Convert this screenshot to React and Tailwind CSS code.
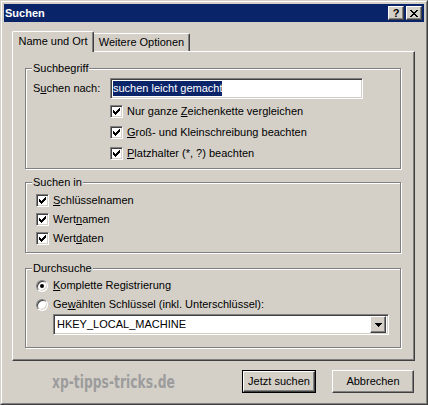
import React from "react";

const raised =
  "border border-t-white border-l-white border-r-[#404040] border-b-[#404040] shadow-[inset_-1px_-1px_0_#808080]";
const sunken =
  "border border-t-[#808080] border-l-[#808080] border-r-white border-b-white shadow-[inset_1px_1px_0_#404040,inset_-1px_-1px_0_#d4d0c8]";

function Check() {
  const cols = [2, 3, 4, 3, 2, 1, 0];
  return (
    <svg width="7" height="7" viewBox="0 0 7 7" shapeRendering="crispEdges">
      {cols.map((t, i) => (
        <rect key={i} x={i} y={t} width="1" height="3" fill="#000" />
      ))}
    </svg>
  );
}

function CheckBox({ children, className = "" }) {
  return (
    <div className={"flex items-center gap-[4px] " + className}>
      <div className={"w-[13px] h-[13px] bg-white flex items-center justify-center " + sunken}>
        <Check />
      </div>
      <span>{children}</span>
    </div>
  );
}

function Radio({ checked, children, className = "" }) {
  return (
    <div className={"flex items-center gap-[5px] " + className}>
      <div className="w-[12px] h-[12px] rounded-full bg-white border border-t-[#808080] border-l-[#808080] border-r-white border-b-white shadow-[inset_1px_1px_0_#404040,inset_-1px_-1px_0_#d4d0c8] flex items-center justify-center">
        {checked && <div className="w-[4px] h-[4px] rounded-full bg-black" />}
      </div>
      <span>{children}</span>
    </div>
  );
}

function Group({ title, className = "", children }) {
  return (
    <fieldset
      className={
        "w-[376px] border border-[#808080] shadow-[1px_1px_0_#fff,inset_1px_1px_0_#fff] " +
        className
      }
    >
      <legend className="ml-[6px] px-[1px] leading-[13px] bg-[#d4d0c8]">{title}</legend>
      {children}
    </fieldset>
  );
}

export default function App() {
  return (
    <div className="w-[428px] h-[405px] bg-[#d4d0c8] text-black text-[11px] leading-[13px] font-['Liberation_Sans',Arial,sans-serif] border border-t-[#d4d0c8] border-l-[#d4d0c8] border-r-[#404040] border-b-[#404040]">
      <div className="h-full border border-t-white border-l-white border-r-[#808080] border-b-[#808080] p-[2px]">
        {/* Title bar */}
        <div className="h-[18px] bg-[#0a246a] flex items-center justify-between pl-[1px] pr-[2px]">
          <span className="text-white font-bold">Suchen</span>
          <div className="flex gap-[2px]">
            <div className={"w-[16px] h-[14px] bg-[#d4d0c8] flex items-center justify-center font-bold text-[11px] leading-none " + raised}>
              ?
            </div>
            <div className={"w-[16px] h-[14px] bg-[#d4d0c8] flex items-center justify-center " + raised}>
              <svg width="8" height="7" viewBox="0 0 8 7" shapeRendering="crispEdges">
                <path d="M0 0h2v1h-2zM6 0h2v1h-2zM1 1h2v1h-2zM5 1h2v1h-2zM2 2h4v1h-4zM3 3h2v1h-2zM2 4h4v1h-4zM1 5h2v1h-2zM5 5h2v1h-2zM0 6h2v1h-2zM6 6h2v1h-2z" fill="#000" />
              </svg>
            </div>
          </div>
        </div>

        {/* Tabs */}
        <div className="pl-[8px] pt-[9px]">
          <div className="flex items-end h-[20px]">
            <div className="relative z-10 -mb-px h-[21px] w-[82px] bg-[#d4d0c8] border-t border-l border-r border-t-white border-l-white border-r-[#404040] rounded-t-[2px] shadow-[inset_-1px_0_0_#808080] flex items-center justify-center pb-[2px]">
              Name und Ort
            </div>
            <div className="h-[18px] w-[96px] border-t border-r border-t-white border-r-[#404040] rounded-tr-[2px] shadow-[inset_-1px_0_0_#808080] flex items-center justify-center">
              Weitere Optionen
            </div>
          </div>

          {/* Panel */}
          <div className={"w-[403px] h-[310px] px-[12px] pt-[10px] flex flex-col " + raised}>
            <Group title="Suchbegriff" className="pb-[4px]">
              <div className="flex items-center mt-[3px] h-[21px]">
                <span className="ml-[7px] w-[77px]">
                  S<u>u</u>chen nach:
                </span>
                <div className={"w-[253px] h-[21px] bg-white p-[2px] " + sunken}>
                  <span className="inline-block h-[15px] leading-[15px] bg-[#0a246a] text-white">
                    suchen leicht gemacht
                  </span>
                </div>
              </div>
              <div className="ml-[84px] mt-[2px] flex flex-col">
                <CheckBox className="h-[21px]">
                  Nur ganze <u>Z</u>eichenkette vergleichen
                </CheckBox>
                <CheckBox className="h-[21px]">
                  <u>G</u>roß- und Kleinschreibung beachten
                </CheckBox>
                <CheckBox className="h-[21px]">
                  <u>P</u>latzhalter (*, ?) beachten
                </CheckBox>
              </div>
            </Group>

            <Group title="Suchen in" className="mt-[7px] pb-[4px]">
              <div className="ml-[10px] mt-[2px] flex flex-col">
                <CheckBox className="h-[19px]">
                  <u>S</u>chlüsselnamen
                </CheckBox>
                <CheckBox className="h-[19px]">
                  Wert<u>n</u>amen
                </CheckBox>
                <CheckBox className="h-[19px]">
                  Wert<u>d</u>aten
                </CheckBox>
              </div>
            </Group>

            <Group title="Durchsuche" className="mt-[9px] pb-[12px]">
              <div className="ml-[10px] mt-[1px] flex flex-col">
                <Radio checked className="h-[19px]">
                  <u>K</u>omplette Registrierung
                </Radio>
                <Radio className="h-[19px]">
                  Ge<u>w</u>ählten Schlüssel (inkl. Unterschlüssel):
                </Radio>
                <div className={"ml-[17px] w-[336px] h-[21px] bg-white flex items-center justify-between p-[2px] " + sunken}>
                  <span className="pl-[1px]">HKEY_LOCAL_MACHINE</span>
                  <div className={"w-[16px] h-[17px] bg-[#d4d0c8] flex items-center justify-center " + raised}>
                    <svg width="7" height="4" viewBox="0 0 7 4" shapeRendering="crispEdges">
                      <path d="M0 0h7v1h-7zM1 1h5v1h-5zM2 2h3v1h-3zM3 3h1v1h-1z" fill="#000" />
                    </svg>
                  </div>
                </div>
              </div>
            </Group>
          </div>
        </div>

        {/* Bottom row */}
        <div className="flex items-center mt-[9px] pl-[48px] pr-[10px]">
          <span className="w-[180px] text-[18px] leading-[23px] font-bold text-[#9c9c9c] font-['DejaVu_Sans_Condensed','DejaVu_Sans',sans-serif] origin-left scale-x-[0.76] whitespace-nowrap">
            xp-tipps-tricks.de
          </span>
          <div className="ml-auto flex gap-[16px]">
            <div className="w-[74px] h-[23px] border border-black">
              <div className={"h-full bg-[#d4d0c8] flex items-center justify-center " + raised}>
                Jetzt suchen
              </div>
            </div>
            <div className={"w-[82px] h-[23px] bg-[#d4d0c8] flex items-center justify-center " + raised}>
              Abbrechen
            </div>
          </div>
        </div>
      </div>
    </div>
  );
}
